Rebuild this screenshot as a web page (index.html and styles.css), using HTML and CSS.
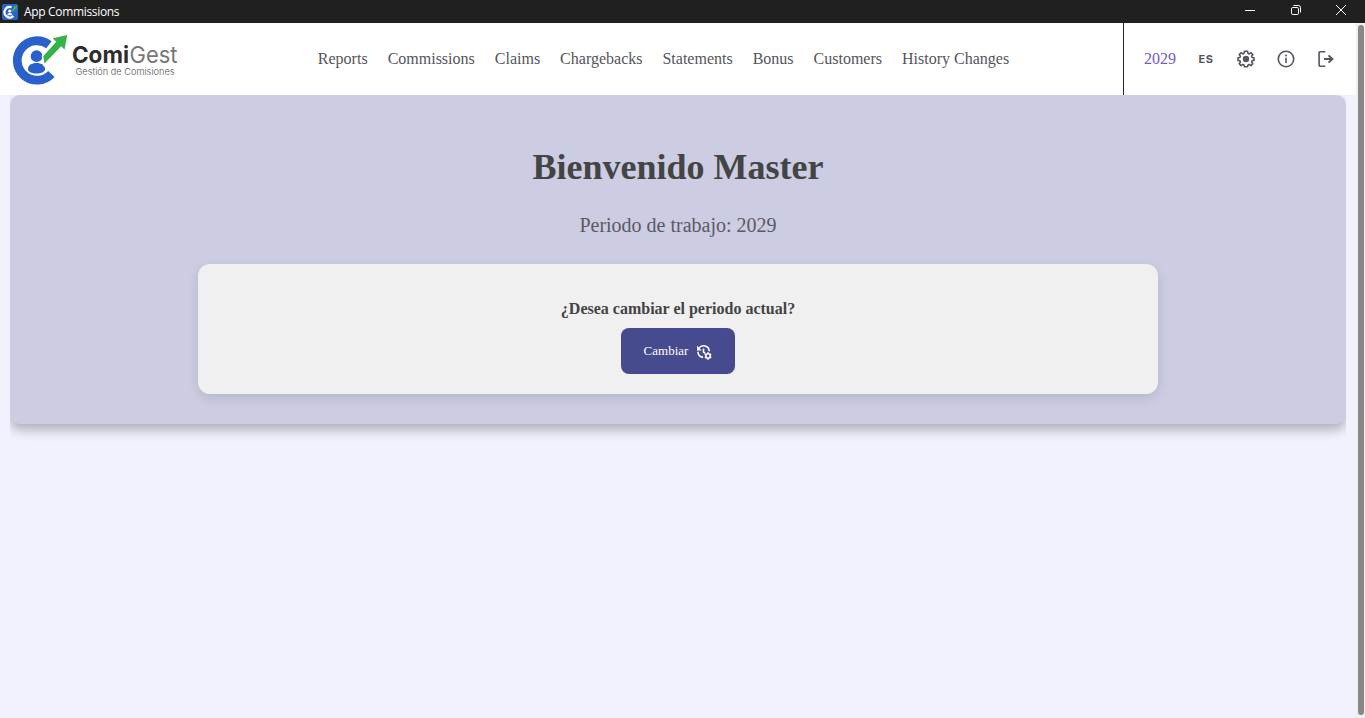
FILE: index.html
```html
<!DOCTYPE html>
<html lang="es">
<head>
    <meta charset="UTF-8">
    <meta name="viewport" content="width=device-width, initial-scale=1.0">
    <title>App Commissions</title>
    <link rel="stylesheet" href="styles.css">
</head>
<body>
    <div class="titlebar">
        <svg class="app-icon" viewBox="0 0 16 16">
            <rect width="16" height="16" rx="2" fill="#2a62cc"/>
            <path d="M9.6 3.2A5.3 5.3 0 1 0 11.5 12" fill="none" stroke="#fff" stroke-width="2.2"/>
            <circle cx="7.7" cy="7" r="1.6" fill="#fff"/>
            <path d="M5.2 11.2a2.6 2.2 0 0 1 5.2 0z" fill="#fff"/>
            <path d="M10 7.5l4-4.5" stroke="#37b24a" stroke-width="2.2"/>
            <path d="M11 2.5l4.3-1.3-1 4.3z" fill="#37b24a"/>
        </svg>
        <span class="titlebar-text">App Commissions</span>
        <div class="window-buttons">
            <svg viewBox="0 0 12 12"><path d="M1 6.5h10"/></svg>
            <svg viewBox="0 0 12 12"><rect x="1.5" y="3.5" width="7" height="7" rx="1.3"/><path d="M3.5 1.5h5a2 2 0 0 1 2 2v5"/></svg>
            <svg viewBox="0 0 12 12"><path d="M1 1l10 10M11 1L1 11"/></svg>
        </div>
    </div>

    <div class="window">
        <div class="page">
            <header class="header">
                <svg class="logo" viewBox="0 0 180 72">
                    <path d="M48.900 21.800A19.700 19.700 0 1 0 51.400 50.900" fill="none" stroke="#2a60cb" stroke-width="8.800"/>
                    <circle cx="36.600" cy="33.200" r="5.900" fill="#2a60cb"/>
                    <path d="M28 46.300c0-4 3.500-6.200 8.500-6.200s8.500 2.200 8.500 6.200c0 2.800-4 4.200-8.500 4.200s-8.500-1.400-8.500-4.200z" fill="#2a60cb"/>
                    <path d="M43.200 33.200L56.200 18.700 52.700 15.300 67.300 11.900 64.500 26.400 61.200 23.300 44.500 40.500z" fill="#37b24a" stroke="#fff" stroke-width="3" paint-order="stroke"/>
                    <text x="72" y="39.500" class="logo-name logo-bold" textLength="57" lengthAdjust="spacingAndGlyphs">Comi</text>
                    <text x="129.500" y="39.500" class="logo-name logo-light" textLength="48" lengthAdjust="spacingAndGlyphs">Gest</text>
                    <text x="75.500" y="51.800" class="logo-sub" textLength="99" lengthAdjust="spacingAndGlyphs">Gestión de Comisiones</text>
                </svg>
                <nav class="menu">
                    <a>Reports</a>
                    <a>Commissions</a>
                    <a>Claims</a>
                    <a>Chargebacks</a>
                    <a>Statements</a>
                    <a>Bonus</a>
                    <a>Customers</a>
                    <a>History Changes</a>
                </nav>
                <div class="tools">
                    <span class="year">2029</span>
                    <span class="lang">ES</span>
                    <svg viewBox="0 0 20 20">
                        <path d="M8.500 2.300h3l.5 2.100 1.200.5 1.700-1.200 1.900 1.900-1.200 1.700.5 1.200 1.900.3v2.600l-1.900.4-.5 1.200 1.200 1.700-1.900 1.900-1.700-1.200-1.200.5-.5 1.900h-3l-.5-1.900-1.200-.5-1.700 1.200-1.900-1.900 1.200-1.700-.5-1.200-1.900-.4V8.800l1.900-.3.5-1.200-1.200-1.700 1.900-1.900 1.700 1.200 1.200-.5z" stroke-linejoin="round"/>
                        <circle cx="10" cy="10" r="3.200" class="fill"/>
                    </svg>
                    <svg viewBox="0 0 20 20">
                        <circle cx="10" cy="10" r="7.700"/>
                        <path d="M10 8.800v5.200"/>
                        <circle cx="10" cy="6.600" r="1" class="fill"/>
                    </svg>
                    <svg viewBox="0 0 20 20">
                        <path d="M9.300 2.800H4.100a1 1 0 0 0-1 1v12.400a1 1 0 0 0 1 1h5.200"/>
                        <path d="M8 10h8.300M12.500 6.400l3.900 3.600-3.900 3.600" stroke-width="1.900"/>
                    </svg>
                </div>
            </header>

            <main class="content">
                <section class="welcome">
                    <h1>Bienvenido Master</h1>
                    <p class="period">Periodo de trabajo: 2029</p>
                    <div class="card">
                        <p class="question">¿Desea cambiar el periodo actual?</p>
                        <button class="change-button">
                            Cambiar
                            <svg viewBox="0 0 16 16">
                                <path d="M2.800 4.200A5.800 5.800 0 0 1 13.300 7.200M1.900 7.800a6 6 0 0 0 5.200 5.600"/>
                                <path d="M1 1.700v4.700h4.700z" class="solid"/>
                                <path d="M7.500 4.500v3.600l1.700 1.200"/>
                                <circle cx="12" cy="12" r="2.200"/>
                                <path d="M12 8.300v1.200M12 14.500v1.200M8.800 10.200l1 .6M14.200 13.200l1 .6M8.800 13.800l1-.6M14.200 10.800l1-.6"/>
                            </svg>
                        </button>
                    </div>
                </section>
            </main>
        </div>
        <div class="scrollbar">
            <div class="thumb"></div>
        </div>
    </div>
</body>
</html>
```
FILE: styles.css
```css
* {
    box-sizing: border-box;
}
body {
    margin: 0;
    height: 100vh;
    display: flex;
    flex-direction: column;
    overflow: hidden;
    font-family: "Liberation Serif", "Times New Roman", serif;
    background-color: #f2f2ff;
}
.titlebar {
    display: flex;
    align-items: center;
    flex: none;
    height: 23px;
    padding: 0 18px 0 2px;
    background-color: #202020;
    color: #fff;
}
.app-icon {
    width: 16px;
    height: 16px;
    margin-right: 6px;
}
.titlebar-text {
    font-family: "Open Sans", sans-serif;
    font-size: 12px;
    letter-spacing: -0.33px;
}
.window-buttons {
    display: flex;
    gap: 33.5px;
    margin-left: auto;
    margin-top: -3px;
}
.window-buttons svg {
    width: 12px;
    height: 12px;
    fill: none;
    stroke: #fff;
}
.window {
    display: flex;
    flex: 1;
}
.page {
    flex: 1;
}
.header {
    display: flex;
    height: 72px;
    background-color: #fff;
}
.logo {
    width: 180px;
    height: 72px;
}
.logo-name {
    font-family: Inter, sans-serif;
    font-size: 23px;
}
.logo-bold {
    font-weight: bold;
    fill: #2d2d2d;
}
.logo-light {
    fill: #777;
}
.logo-sub {
    font-family: Inter, sans-serif;
    font-size: 9.5px;
    font-weight: 300;
    fill: #555;
}
.menu {
    display: flex;
    flex: 1;
    align-items: center;
    justify-content: center;
    gap: 20px;
    padding-left: 24px;
    font-size: 16px;
    color: #54545c;
}
.tools {
    display: flex;
    align-items: center;
    gap: 20px;
    width: 233px;
    padding-left: 20px;
    border-left: 1px solid #222;
    color: #54545f;
}
.year {
    width: 32px;
    font-size: 16px;
    color: #6a5acd;
}
.lang {
    width: 20px;
    font-family: Inter, sans-serif;
    font-size: 11px;
    font-weight: bold;
    letter-spacing: 0.5px;
    text-align: center;
}
.tools svg {
    width: 20px;
    height: 20px;
    fill: none;
    stroke: currentColor;
    stroke-width: 1.6;
}
.tools .fill {
    fill: currentColor;
    stroke: none;
}
.content {
    height: 623px;
    margin: 0 10px;
    overflow: hidden;
}
.welcome {
    display: flex;
    flex-direction: column;
    align-items: center;
    height: 329px;
    padding-top: 51px;
    border-radius: 10px;
    background-color: #cccce2;
    box-shadow: 0 6px 12px rgba(0, 0, 0, 0.28);
}
h1 {
    margin: 0;
    font-size: 36px;
    line-height: 42px;
    color: #444;
}
.period {
    margin: 26px 0 27px;
    font-size: 20px;
    line-height: 23px;
    color: #5a5a62;
}
.card {
    display: flex;
    flex-direction: column;
    align-items: center;
    width: 960px;
    height: 130px;
    padding-top: 36px;
    border-radius: 12px;
    background-color: #f0f0f0;
    box-shadow: 0 4px 12px rgba(0, 0, 0, 0.1);
}
.question {
    margin: 0 0 10px;
    font-size: 16px;
    font-weight: bold;
    line-height: 18px;
    color: #444;
}
.change-button {
    display: flex;
    align-items: center;
    justify-content: center;
    gap: 8px;
    width: 114px;
    height: 46px;
    padding: 0;
    border: none;
    border-radius: 8px;
    background-color: #464a8f;
    color: #fff;
    font-family: inherit;
    font-size: 13px;
    cursor: pointer;
}
.change-button svg {
    width: 16px;
    height: 16px;
    margin-top: 1px;
    fill: none;
    stroke: #fff;
    stroke-width: 1.6;
}
.change-button .solid {
    fill: #fff;
    stroke: none;
}
.scrollbar {
    width: 9px;
    padding: 2px 1px 3px 2px;
    background-color: #f0f0f0;
}
.thumb {
    height: 100%;
    border-radius: 3px;
    background-color: #888;
}
```
